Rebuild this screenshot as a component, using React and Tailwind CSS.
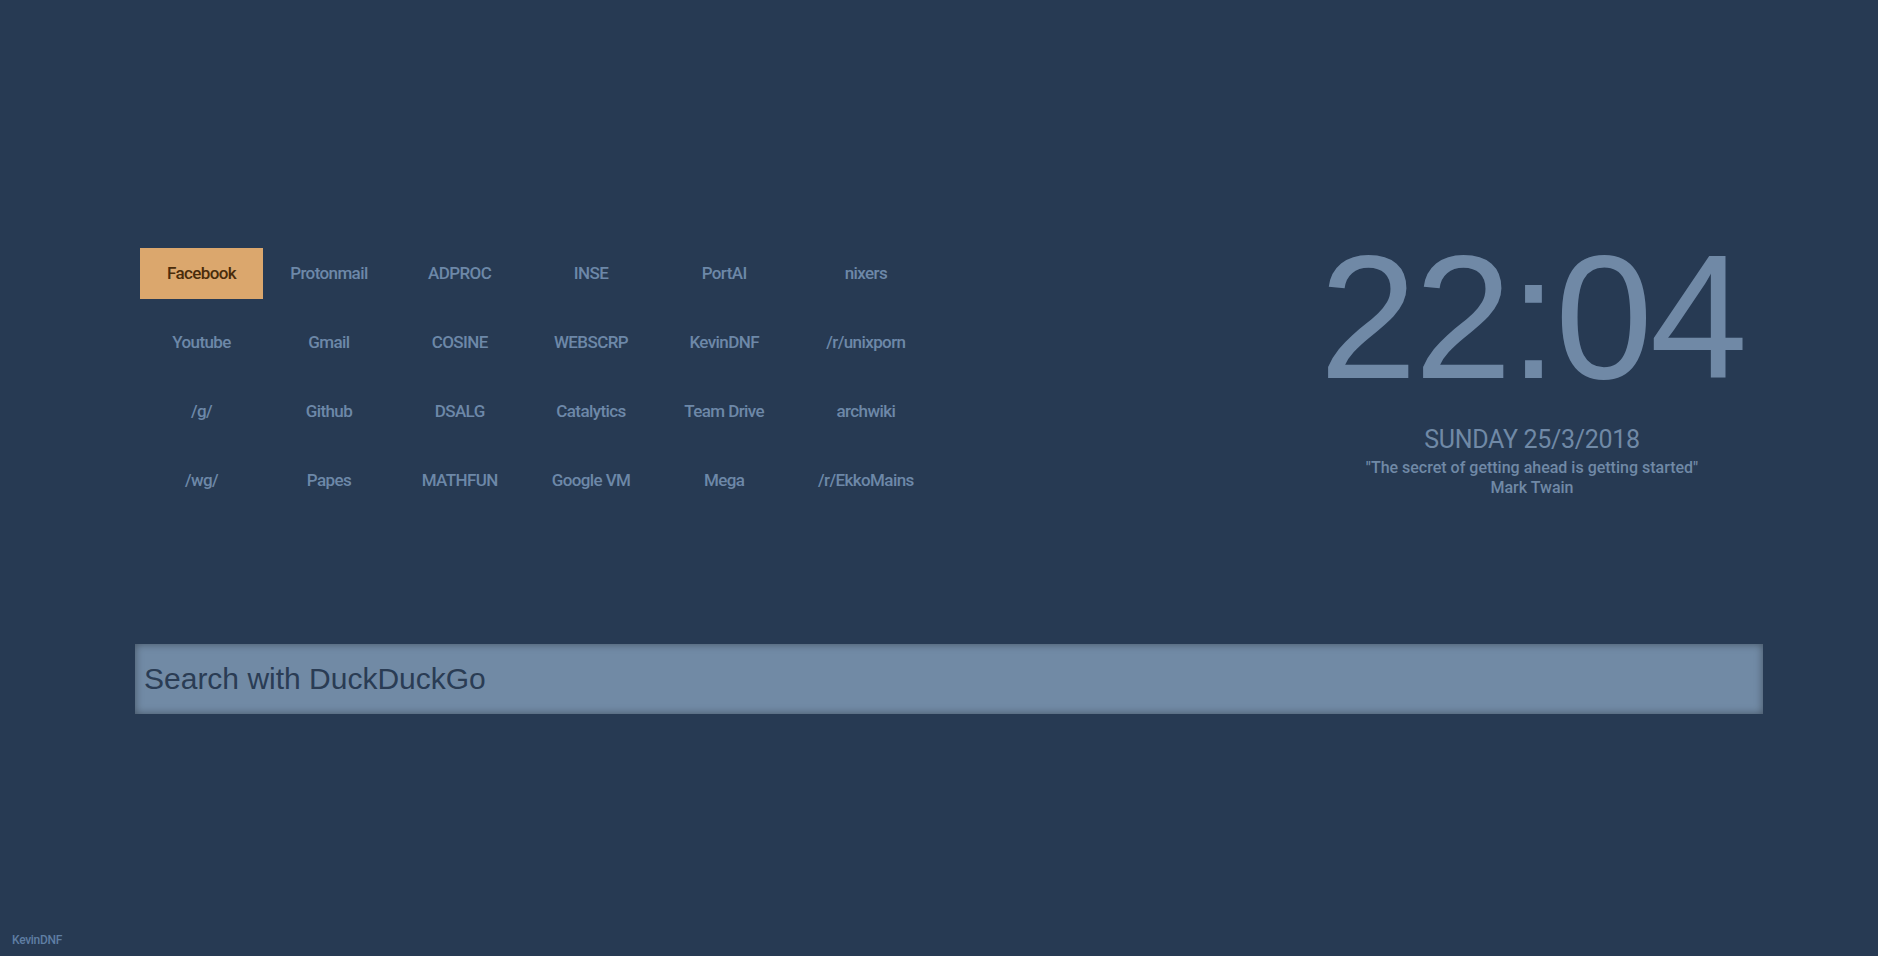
import React from "react";

const rows = [
  ["Facebook", "Protonmail", "ADPROC", "INSE", "PortAI", "nixers"],
  ["Youtube", "Gmail", "COSINE", "WEBSCRP", "KevinDNF", "/r/unixporn"],
  ["/g/", "Github", "DSALG", "Catalytics", "Team Drive", "archwiki"],
  ["/wg/", "Papes", "MATHFUN", "Google VM", "Mega", "/r/EkkoMains"],
];

const rob = { fontFamily: 'Roboto, "Liberation Sans", sans-serif' };

export default function App() {
  return (
    <div className="min-h-screen h-[956px] w-full bg-[#273a53] flex flex-col overflow-hidden" style={rob}>
      <div className="flex items-start pt-[229px]">
        <div className="ml-[140px] mt-[19px] grid grid-cols-[repeat(6,auto)] gap-y-[18px] w-max">
          {rows.flat().map((l, i) => (
            <a
              key={i}
              className={
                "h-[51px] px-[27px] flex items-center justify-center text-[17px] font-medium tracking-[-0.6px] " +
                (i === 0 ? "bg-[#dba76d] text-[#4a2c0b]" : "text-[#6d88a8]")
              }
            >
              {l}
            </a>
          ))}
        </div>
        <div className="ml-auto mr-[115px] w-[462px] flex flex-col items-center text-[#7089a6]">
          <div className="text-[176px] leading-none tracking-[-3px]" style={{ fontFamily: '"Liberation Sans", Arial, sans-serif' }}>
            22:04
          </div>
          <div className="mt-[21px] text-[25px] leading-[27px] tracking-[-0.3px]">SUNDAY 25/3/2018</div>
          <div className="mt-[5px] text-[16px] leading-[20px] font-medium">"The secret of getting ahead is getting started"</div>
          <div className="text-[16px] leading-[20px] font-medium">Mark Twain</div>
        </div>
      </div>
      <div className="mt-[138px] ml-[135px] w-[1628px] h-[70px] bg-[#718aa5] shadow-[inset_0_0_9px_rgba(0,0,0,0.4)] flex items-center">
        <input
          className="w-full h-full bg-transparent outline-none pl-[9px] text-[30px] text-[#2a3c54] placeholder:text-[#2a3c54]"
          style={{ fontFamily: '"Liberation Sans", Arial, sans-serif' }}
          placeholder="Search with DuckDuckGo"
        />
      </div>
      <div className="mt-auto pl-[12px] pb-[8px] text-[12px] leading-[16px] font-medium tracking-[-0.3px] text-[#5f7ea3]">KevinDNF</div>
    </div>
  );
}
